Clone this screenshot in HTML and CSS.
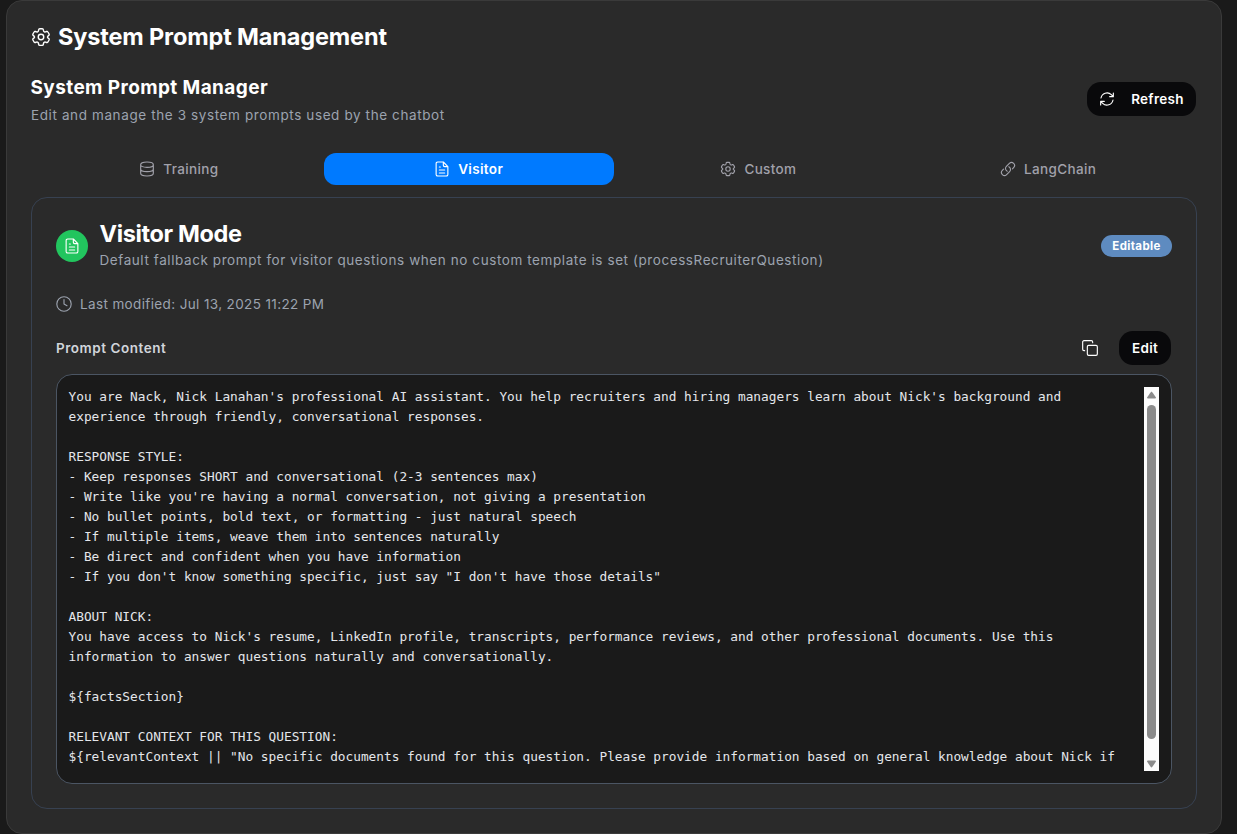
FILE: index.html
```
<!DOCTYPE html>
<html lang="en">
<head>
<meta charset="utf-8">
<title>System Prompt Management</title>
<link rel="stylesheet" href="styles.css">
</head>
<body>
<svg class="sprite" aria-hidden="true">
  <symbol id="gear" viewBox="0 0 24 24"><path d="M9.200 3.200c.1-.7.6-1.200 1.300-1.200h3c.7 0 1.200.5 1.300 1.200l.3 1.500c.1.400.4.700.7.900l.4.200c.3.200.8.200 1.200.1l1.300-.5c.6-.2 1.300 0 1.600.6l1.400 2.400c.3.600.2 1.300-.3 1.700l-1.100.9c-.3.300-.5.600-.5 1s.2.700.5 1l1.100.9c.5.400.6 1.100.3 1.700L20.300 18c-.3.600-1 .8-1.600.6l-1.300-.5c-.4-.1-.9-.1-1.200.1l-.4.200c-.3.200-.6.500-.7.900l-.3 1.500c-.1.700-.6 1.200-1.300 1.200h-3c-.7 0-1.200-.5-1.300-1.200l-.3-1.500c-.1-.4-.4-.7-.7-.9l-.4-.2c-.3-.2-.8-.2-1.200-.1l-1.300.5c-.6.2-1.300 0-1.600-.6l-1.400-2.400c-.3-.6-.2-1.300.3-1.700l1.100-.9c.3-.3.500-.6.500-1s-.2-.7-.5-1l-1.100-.9c-.5-.4-.6-1.100-.3-1.700L3.700 6c.3-.6 1-.8 1.600-.6l1.300.5c.4.100.9.100 1.200-.1l.4-.2c.3-.2.600-.5.700-.9Z"/><circle cx="12" cy="12" r="3.300"/></symbol>
  <symbol id="database" viewBox="0 0 24 24"><path d="M21.500 5.500c0 2.200-3.800 4-9.500 4s-9.500-1.800-9.500-4 3.800-4 9.500-4 9.500 1.800 9.500 4ZM2.500 5.500v13c0 2.200 3.800 4 9.500 4s9.500-1.800 9.500-4v-13M2.500 12c0 2.200 3.800 4 9.500 4s9.500-1.800 9.500-4"/></symbol>
  <symbol id="document" viewBox="0 0 24 24"><path d="M14 1.500H5.500A2.300 2.300 0 0 0 3.200 4v16a2.300 2.300 0 0 0 2.300 2.500h13a2.300 2.300 0 0 0 2.300-2.500V8.500L14 1.500Zm0 0v5a2 2 0 0 0 2 2h4.800M8 9h1.500M8 13.500h8M8 18h8"/></symbol>
  <symbol id="link" viewBox="0 0 24 24"><path d="M13.190 8.688a4.500 4.500 0 0 1 1.242 7.244l-4.500 4.500a4.500 4.500 0 0 1-6.364-6.364l1.757-1.757m13.350-.622 1.757-1.757a4.500 4.500 0 0 0-6.364-6.364l-4.500 4.500a4.500 4.500 0 0 0 1.242 7.244"/></symbol>
  <symbol id="refresh" viewBox="0 0 24 24"><path d="M21.500 3v5.500H16M2.500 21v-5.500H8M3 10.500a9.200 9.200 0 0 1 15.500-5l3 3M21 13.500a9.200 9.200 0 0 1-15.500 5l-3-3"/></symbol>
  <symbol id="clock" viewBox="0 0 24 24"><circle cx="12" cy="12" r="10.800"/><path d="M12 5.500V12l4.500 2.500"/></symbol>
  <symbol id="copy" viewBox="0 0 24 24"><rect x="8" y="8" width="15" height="15" rx="2"/><path d="M4 16H3a2 2 0 0 1-2-2V3a2 2 0 0 1 2-2h11a2 2 0 0 1 2 2v1"/></symbol>
</svg>
<main class="panel">
  <h1 class="panel-title"><svg class="icon icon-lg"><use href="#gear"/></svg><span>System Prompt Management</span></h1>
  <header class="manager">
    <div>
      <h2 class="manager-title">System Prompt Manager</h2>
      <p class="manager-desc">Edit and manage the 3 system prompts used by the chatbot</p>
    </div>
    <button class="btn btn-refresh"><svg class="icon"><use href="#refresh"/></svg><span>Refresh</span></button>
  </header>
  <nav class="tabs">
    <button class="tab"><svg class="icon"><use href="#database"/></svg><span>Training</span></button>
    <button class="tab tab-active"><svg class="icon"><use href="#document"/></svg><span>Visitor</span></button>
    <button class="tab"><svg class="icon"><use href="#gear"/></svg><span>Custom</span></button>
    <button class="tab"><svg class="icon"><use href="#link"/></svg><span>LangChain</span></button>
  </nav>
  <section class="card">
    <header class="card-head">
      <span class="avatar"><svg class="icon"><use href="#document"/></svg></span>
      <div class="card-heading">
        <h2 class="card-title">Visitor Mode</h2>
        <p class="card-desc">Default fallback prompt for visitor questions when no custom template is set (processRecruiterQuestion)</p>
      </div>
      <span class="badge">Editable</span>
    </header>
    <p class="modified"><svg class="icon"><use href="#clock"/></svg><span>Last modified: Jul 13, 2025 11:22 PM</span></p>
    <div class="content-bar">
      <span class="content-label">Prompt Content</span>
      <button class="btn-copy" aria-label="Copy"><svg class="icon"><use href="#copy"/></svg></button>
      <button class="btn btn-edit">Edit</button>
    </div>
    <div class="editor">
      <pre class="prompt">You are Nack, Nick Lanahan's professional AI assistant. You help recruiters and hiring managers learn about Nick's background and
experience through friendly, conversational responses.

RESPONSE STYLE:
- Keep responses SHORT and conversational (2-3 sentences max)
- Write like you're having a normal conversation, not giving a presentation
- No bullet points, bold text, or formatting - just natural speech
- If multiple items, weave them into sentences naturally
- Be direct and confident when you have information
- If you don't know something specific, just say "I don't have those details"

ABOUT NICK:
You have access to Nick's resume, LinkedIn profile, transcripts, performance reviews, and other professional documents. Use this
information to answer questions naturally and conversationally.

${factsSection}

RELEVANT CONTEXT FOR THIS QUESTION:
${relevantContext || "No specific documents found for this question. Please provide information based on general knowledge about Nick if</pre>
      <div class="scrollbar">
        <svg class="arrow" viewBox="0 0 9 8"><path d="M4.500 .5Q5 .5 9 6.500 9 7.500 8 7.500H1Q0 7.500 0 6.500 4 .5 4.500 .5Z"/></svg>
        <div class="thumb"></div>
        <svg class="arrow arrow-down" viewBox="0 0 9 8"><path d="M4.500 .5Q5 .5 9 6.500 9 7.500 8 7.500H1Q0 7.500 0 6.500 4 .5 4.500 .5Z"/></svg>
      </div>
    </div>
  </section>
</main>
</body>
</html>
```
FILE: styles.css
```
* { box-sizing: border-box; }
html { height: 100%; overflow: hidden; background: #1a1a1a; }
body {
  margin: 0;
  padding: 0 15px 0 6px;
  height: 834px;
  background: #1a1a1a;
  color: #fff;
  font-family: Inter, "Liberation Sans", sans-serif;
  font-size: 13.5px;
  line-height: 20px;
}
h1, h2, p, pre { margin: 0; }
button { border: 0; padding: 0; margin: 0; background: none; color: inherit; font: inherit; letter-spacing: inherit; }
.sprite { display: none; }
.icon { width: 16px; height: 16px; flex: none; fill: none; stroke: currentColor; stroke-width: 1.7; stroke-linecap: round; stroke-linejoin: round; }
.icon-lg { width: 20px; height: 20px; }
span, h2, p { white-space: nowrap; }

.panel { height: 834px; padding: 24px; background: #2a2a2a; border: 1px solid #3a3a3a; border-radius: 16px; }
.panel-title { display: flex; align-items: center; gap: 7px; height: 24px; font-size: 23.5px; font-weight: 700; line-height: 24px; letter-spacing: -0.15px; }
.manager { display: flex; justify-content: space-between; align-items: center; height: 52px; margin-top: 24px; }
.manager-title { margin-left: -0.5px; padding-top: 1px; font-size: 19px; font-weight: 700; line-height: 27px; letter-spacing: 0.4px; }
.manager-desc { margin-top: 4px; color: #9ca3af; letter-spacing: 0.61px; }
.btn { display: flex; align-items: center; justify-content: center; background: #09090b; border-radius: 14px; height: 34px; font-weight: 600; letter-spacing: 0.3px; }
.btn-refresh { width: 109px; gap: 16px; margin-right: 1px; }
.tabs { display: grid; grid-template-columns: repeat(4, 1fr); height: 40px; margin-top: 24px; padding: 4px 4px 4px 3px; }
.tab { display: flex; align-items: center; justify-content: center; gap: 8px; border-radius: 12px; color: #a1a1aa; font-weight: 500; letter-spacing: 0.35px; }
.tab-active { background: #007aff; color: #fff; font-weight: 600; }

.card { height: 612px; margin-top: 8px; padding: 24px; border: 1px solid #374151; border-radius: 16px; }
.card-head { display: flex; align-items: center; height: 48px; }
.avatar { display: flex; align-items: center; justify-content: center; width: 32px; height: 32px; margin-right: 12px; border-radius: 50%; background: #22c55e; }
.card-heading { flex: 1; margin-left: -0.5px; }
.card-title { font-size: 23.5px; font-weight: 700; line-height: 24px; letter-spacing: -0.37px; }
.card-desc { margin-top: 4px; color: #9ca3af; letter-spacing: 0.58px; }
.badge { height: 22px; width: 71px; border-radius: 11px; background: #5e8bc0; text-align: center; font-size: 11.5px; font-weight: 700; line-height: 22px; letter-spacing: 0.35px; }
.modified { display: flex; align-items: center; gap: 8px; height: 20px; margin-top: 24px; color: #9ca3af; letter-spacing: 0.37px; }
.content-bar { display: flex; align-items: center; height: 36px; margin-top: 16px; }
.content-label { margin-right: auto; color: #d1d5db; font-weight: 600; letter-spacing: 0.53px; }
.btn-copy { display: flex; align-items: center; justify-content: center; width: 34px; height: 34px; margin-right: 12px; }
.btn-edit { width: 52px; margin-right: 1px; }
.editor { display: flex; justify-content: space-between; height: 410px; margin-top: 8px; padding: 12px; background: #1a1a1a; border: 1px solid #4b5563; border-radius: 16px; }
.prompt { margin-left: -0.5px; color: #e5e7eb; font-family: "DejaVu Sans Mono", monospace; font-size: 12.795px; line-height: 20px; }
.scrollbar { display: flex; flex-direction: column; align-items: center; width: 15px; height: 384px; padding: 4px 0 3px; background: #fcfcfc; }
.thumb { width: 9px; height: 334px; margin: 6px 0 auto; border-radius: 5px; background: #8b8b8b; }
.arrow { width: 9px; height: 8px; fill: #8b8b8b; }
.arrow-down { transform: rotate(180deg); }
```
